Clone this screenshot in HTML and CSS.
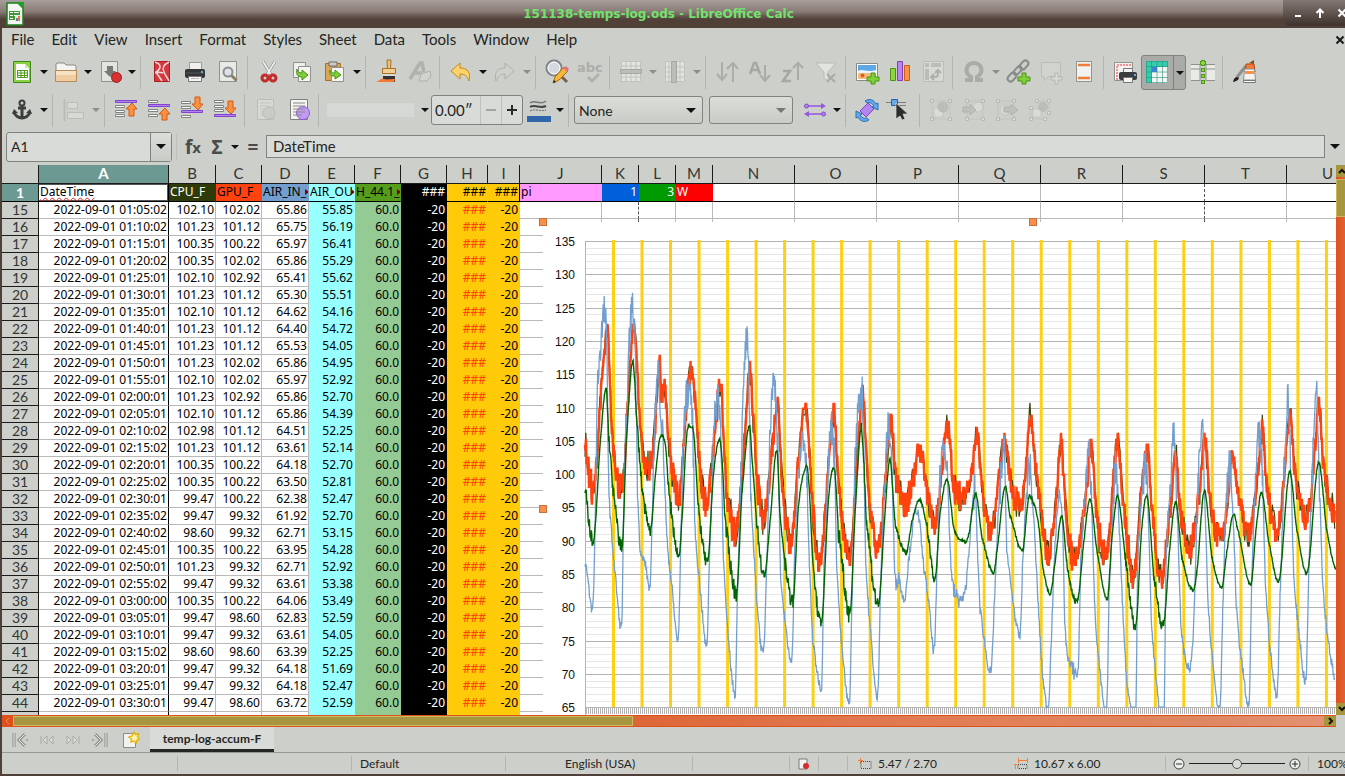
FILE: index.html
```
<!DOCTYPE html>
<html lang="en">
<head>
<meta charset="utf-8">
<title>151138-temps-log.ods - LibreOffice Calc</title>
<meta name="viewport" content="width=device-width, initial-scale=1.0">
<link rel="stylesheet" href="styles.css">
</head>
<body>
<div class="window">
    <header class="titlebar">
        <svg class="app-icon" width="20" height="24" viewBox="0 0 20 24"><path d="M2 1h11l5 5v17H2z" fill="#f4f6f2" stroke="#18811a" stroke-width="1.5"/><path d="M12 0h7v7z" fill="#1fa31f"/><path d="M4 9h11v9H4z" fill="#3f9c35"/><path d="M5 10h3v1H5zm4 0h5v1H9zm-4 3h3v1H5zm4 0h5v1H9zm-4 3h3v1H5z" fill="#fff"/><path d="M10 13h7v7h-7z" fill="#e9eef2"/><path d="M11 16h2v3h-2z" fill="#4b83c4"/><path d="M13 14h2v5h-2z" fill="#f4793b"/></svg>
        <h1>151138-temps-log.ods - LibreOffice Calc</h1>
        <div class="controls">
            <button aria-label="Minimize"><svg width="10" height="12" viewBox="0 0 10 12"><path d="M2 9h6" stroke="#fff" stroke-width="2"/></svg></button>
            <button aria-label="Maximize"><svg width="10" height="12" viewBox="0 0 10 12"><path d="M5 11V3M1.500 6 5 2.500 8.500 6" fill="none" stroke="#fff" stroke-width="2"/></svg></button>
            <button aria-label="Close"><svg width="10" height="12" viewBox="0 0 10 12"><path d="M1.500 2.500l7 7m0-7l-7 7" stroke="#fff" stroke-width="2"/></svg></button>
        </div>
    </header>

    <nav class="menubar">
        <button>File</button>
        <button>Edit</button>
        <button>View</button>
        <button>Insert</button>
        <button>Format</button>
        <button>Styles</button>
        <button>Sheet</button>
        <button>Data</button>
        <button>Tools</button>
        <button>Window</button>
        <button>Help</button>
        <button class="close-doc" aria-label="Close document"><svg width="10" height="10" viewBox="0 0 10 10"><path d="M1.500 1.500l7 7m0-7l-7 7" stroke="#1a1a1a" stroke-width="2"/></svg></button>
    </nav>

    <div class="toolbar" role="toolbar" aria-label="Standard">
        <button class="tool" aria-label="New"><svg viewBox="0 0 24 24"><path d="M3.500 1.500h17v21h-17z" fill="#8ad143" stroke="#3f8a10"/><path d="M6 4h9l4 4v12H6z" fill="#fff"/><path d="M15 4v4h4z" fill="#cfe8b8"/><path d="M7.500 10.500h10v7h-10zM7.500 13h10M7.500 15.500h10M11 10.500v7M14.500 10.500v7" fill="#fff" stroke="#4d9a1c"/></svg></button>
        <button class="drop" aria-label="New options"></button>
        <button class="tool" aria-label="Open"><svg viewBox="0 0 24 24"><path d="M2 20V4l1-1h7l2 2h9l1 1v14z" fill="#f4f4f2" stroke="#8a8a86"/><path d="M1.500 10.500h21v11h-21z" fill="#f0cda0" stroke="#b58a55"/><path d="M2 11h20v4H2z" fill="#f8e0c2"/></svg></button>
        <button class="drop" aria-label="Open options"></button>
        <button class="tool" aria-label="Save"><svg viewBox="0 0 24 24"><path d="M3.500 1.500h16v20h-16z" fill="#e2e4e0" stroke="#90928e"/><path d="M9 6h6v5h3l-6 6-6-6h3z" fill="#777975"/><circle cx="18.500" cy="17.500" r="5" fill="#d63232" stroke="#a81b1b"/></svg></button>
        <button class="drop" aria-label="Save options"></button>
        <span class="sep"></span>
        <button class="tool" aria-label="Export as PDF"><svg viewBox="0 0 24 24"><path d="M4.500 1.500h15v20h-15z" fill="#d3393e" stroke="#b2191f"/><path d="M5 2c6 2 7 6 1 10l6 9M19 2c-6 3-7 6-5 10 1 3 3 5 5 9M13 13c-3-1-5-1-8 0" fill="none" stroke="#f4dcdc" stroke-width="1.500"/></svg></button>
        <button class="tool" aria-label="Print"><svg viewBox="0 0 24 24"><path d="M6.500 2.500h12v8h-12z" fill="#f0f0ee" stroke="#9a9a98"/><rect x="2" y="9" width="20" height="9" rx="2" fill="#333537"/><path d="M3 13h18" stroke="#55585a"/><path d="M18 11h2v2h-2z" fill="#5ab2ee"/><path d="M5.500 16.500h13v5h-13z" fill="#f4f4f2" stroke="#777"/><path d="M8 18.500h8" stroke="#bbb"/></svg></button>
        <button class="tool" aria-label="Print Preview"><svg viewBox="0 0 24 24"><path d="M3.500 1.500h17v20h-17z" fill="#e8eae6" stroke="#90928e"/><circle cx="12" cy="12" r="4.500" fill="#dde2e6" stroke="#8a8f93" stroke-width="2"/><path d="M15.500 15.500l5 5" stroke="#8f7b66" stroke-width="3"/></svg></button>
        <span class="sep"></span>
        <button class="tool" aria-label="Cut"><svg viewBox="0 0 24 24"><path d="M6 1.500l8 13M18 1.500l-8 13" stroke="#8e908e" stroke-width="3"/><path d="M6 1.500l8 13M18 1.500l-8 13" stroke="#f4f4f4" stroke-width="1.500"/><ellipse cx="8" cy="18" rx="3" ry="3" fill="#c9ccc6" stroke="#c42b2b" stroke-width="3"/><ellipse cx="16" cy="18" rx="3" ry="3" fill="#c9ccc6" stroke="#c42b2b" stroke-width="3"/></svg></button>
        <button class="tool" aria-label="Copy"><svg viewBox="0 0 24 24"><path d="M3.500 2.500h12v15h-12z" fill="#eef0ec" stroke="#90928e"/><path d="M8.500 6.500h12v15h-12z" fill="#f4f5f2" stroke="#90928e"/><path d="M7 9c0 3 2 4 5 4v-3l6 5-6 5v-3c-5 0-6-3-5-8z" fill="#7fce3c" stroke="#4a9411"/></svg></button>
        <button class="tool" aria-label="Paste"><svg viewBox="0 0 24 24"><path d="M2.500 3.500h15v17h-15z" fill="#d6a557" stroke="#a87222"/><path d="M6 2h8v4H6z" fill="#ccc" stroke="#6a6a6a"/><path d="M8.500 7.500h12v14h-12z" fill="#f4f5f2" stroke="#90928e"/><path d="M7 10c0 3 2 3 5 3v-3l6 5-6 4v-3c-5 0-6-2-5-6z" fill="#7fce3c" stroke="#4a9411"/></svg></button>
        <button class="drop" aria-label="Paste options"></button>
        <span class="sep"></span>
        <button class="tool" aria-label="Clone Formatting"><svg viewBox="0 0 24 24"><path d="M12 0h4l-.5 9h-3z" fill="#ecc479" stroke="#a87222"/><path d="M7.500 8.500h13v5h-13z" fill="#efcf92" stroke="#a87222"/><path d="M8 14h12v3H8z" fill="#d9d9d9"/><path d="M8 16h12v6H8z" fill="#333"/><path d="M1 22c4-1 4-4 8-3 3 1 6 0 11 0l-1 3H8z" fill="#f47a34"/></svg></button>
        <button class="tool off" aria-label="Clear Formatting"><svg viewBox="0 0 24 24"><path d="M2 19L12 3h2l2 9M7 13h7" fill="none" stroke="#a4a6a2" stroke-width="3.500"/><path d="M13 14l9-3 1 5-4 5h-8z" fill="#d4d6d2" stroke="#a4a6a2"/></svg></button>
        <span class="sep"></span>
        <button class="tool" aria-label="Undo"><svg viewBox="0 0 24 24"><path d="M2 11l9-8v5c8 0 11 5 9 13-2-5-4-7-9-7v5z" fill="#fbd26b" stroke="#c48a1c"/></svg></button>
        <button class="drop" aria-label="Undo list"></button>
        <button class="tool off" aria-label="Redo"><svg viewBox="0 0 24 24"><path d="M21 11l-9-8v5c-8 0-11 5-9 13 2-5 4-7 9-7v5z" fill="#d0d2ce" stroke="#a4a6a2"/></svg></button>
        <button class="drop off" aria-label="Redo list"></button>
        <span class="sep"></span>
        <button class="tool" aria-label="Find and Replace"><svg viewBox="0 0 24 24"><path d="M15 15l7 7" stroke="#77614c" stroke-width="3"/><circle cx="9" cy="8" r="7.500" fill="#d5dade" stroke="#7f8286" stroke-width="2"/><circle cx="9" cy="8" r="6" fill="none" stroke="#fff"/><path d="M8 23l2-6L19 7l4 4-9 9z" fill="#f7b73c" stroke="#a86a0c"/><path d="M18 8l3-2 3 3-2 3z" fill="#e8717c"/><path d="M8 23l1-3 2 2z" fill="#222"/></svg></button>
        <button class="tool off" aria-label="Spelling"><svg viewBox="0 0 24 24"><text class="abc" x="-1" y="12">abc</text><path d="M10 17l4 4 7-7" fill="none" stroke="#a4a6a2" stroke-width="3"/></svg></button>
        <span class="sep"></span>
        <button class="tool off" aria-label="Row"><svg viewBox="0 0 24 24"><path d="M2.500 1.500h19v20h-19zM7 2v20M12 2v20M17 2v20M2 6h20M2 17h20" fill="#eceeea" stroke="#bcbeba"/><path d="M1.500 9.500h21v4h-21z" fill="#b4b6b2" stroke="#969894"/></svg></button>
        <button class="drop off" aria-label="Row options"></button>
        <button class="tool off" aria-label="Column"><svg viewBox="0 0 24 24"><path d="M2.500 1.500h19v20h-19zM6 2v20M17 2v20M2 7h20M2 12h20M2 17h20" fill="#eceeea" stroke="#bcbeba"/><path d="M8.500 1.500h5v21h-5z" fill="#b4b6b2" stroke="#969894"/></svg></button>
        <button class="drop off" aria-label="Column options"></button>
        <span class="sep"></span>
        <button class="tool off" aria-label="Sort"><svg viewBox="0 0 24 24"><path d="M7 2v18M2 14l5 6 5-6M18 22V4M12 9l6-6 5 6" fill="none" stroke="#9c9e9a" stroke-width="2"/></svg></button>
        <button class="tool off" aria-label="Sort Ascending"><svg viewBox="0 0 24 24"><path d="M2 14L6 3h2l4 11M4 10h6" fill="none" stroke="#969894" stroke-width="2.500"/><path d="M17 5v16M12 15l5 6 5-6" fill="none" stroke="#9c9e9a" stroke-width="2"/></svg></button>
        <button class="tool off" aria-label="Sort Descending"><svg viewBox="0 0 24 24"><path d="M2 11h7l-7 10h8" fill="none" stroke="#969894" stroke-width="2.500"/><path d="M17 20V3M12 8l5-5 5 5" fill="none" stroke="#9c9e9a" stroke-width="2"/></svg></button>
        <button class="tool off" aria-label="AutoFilter"><svg viewBox="0 0 24 24"><path d="M2 3h20l-8 9v9l-4-3v-6z" fill="#eceeea" stroke="#b0b2ae"/><path d="M13 14l8 8m0-8l-8 8" stroke="#9c9e9a" stroke-width="2"/></svg></button>
        <span class="sep"></span>
        <button class="tool" aria-label="Insert Image"><svg viewBox="0 0 24 24"><path d="M1.500 3.500h21v17h-21z" fill="#fff" stroke="#888a86"/><path d="M3 5h18v7H3z" fill="#5fa8e6"/><path d="M3 11c5-3 8 2 18-1v3H3z" fill="#e9f4fd"/><path d="M3 13h18v6H3z" fill="#f3bc7a"/><circle cx="7.500" cy="15.500" r="2" fill="#e05a2a"/><path d="M16 13h4v4h4v4h-4v3h-4v-3h-4v-4h4z" fill="#7fce3c" stroke="#4a9411"/></svg></button>
        <button class="tool" aria-label="Insert Chart"><svg viewBox="0 0 24 24"><path d="M2.500 8.500h5v12h-5z" fill="#8ed544" stroke="#4a9411"/><path d="M9.500 1.500h5v19h-5z" fill="#ba85ea" stroke="#7d40b8"/><path d="M16.500 5.500h5v15h-5z" fill="#fb9243" stroke="#cf5c12"/></svg></button>
        <button class="tool off" aria-label="Pivot Table"><svg viewBox="0 0 24 24"><path d="M2.500 1.500h20v20h-20z" fill="#dcdeda" stroke="#b4b6b2"/><path d="M4 3h4v4H4zM10 3h10v4H10zM4 9h4v11H4z" fill="#b4b6b2"/><path d="M11 17c6 0 6 0 6-6m-3 2l3-3 3 3m-7 1l-3 3 3 3" fill="none" stroke="#a0a29e" stroke-width="2"/></svg></button>
        <span class="sep"></span>
        <button class="tool off" aria-label="Special Character"><svg viewBox="0 0 24 24"><path d="M3 20h6v-3c-8-5-4-14 3-14s11 9 3 14v3h6" fill="none" stroke="#9a9c98" stroke-width="4"/></svg></button>
        <button class="drop off" aria-label="Special character options"></button>
        <button class="tool" aria-label="Insert Hyperlink"><svg viewBox="0 0 24 24"><g fill="none" stroke="#8a8c8a" stroke-width="2"><rect x="13" y="2" width="10" height="6" rx="3" transform="rotate(-48 18 5)"/><rect x="7" y="8" width="10" height="5" rx="2.500" transform="rotate(-48 12 11)"/><rect x="1" y="14" width="10" height="6" rx="3" transform="rotate(-48 6 17)"/></g><path d="M16 13h4v4h4v4h-4v3h-4v-3h-4v-4h4z" fill="#7fce3c" stroke="#4a9411"/></svg></button>
        <button class="tool off" aria-label="Insert Comment"><svg viewBox="0 0 24 24"><path d="M2.500 2.500h19v14H10l-5 4v-4H2.500z" fill="#d4d6d2" stroke="#b4b6b2"/><path d="M16 13h3v4h4v3h-4v4h-3v-4h-4v-3h4z" fill="#dcdeda" stroke="#acaeaa"/></svg></button>
        <button class="tool" aria-label="Headers and Footers"><svg viewBox="0 0 24 24"><path d="M4.500 1.500h15v20h-15z" fill="#f2f3f0" stroke="#90928e"/><path d="M6 5h12M6 18h12" stroke="#f07b3a" stroke-width="2.500"/></svg></button>
        <span class="sep"></span>
        <button class="tool" aria-label="Define Print Area"><svg viewBox="0 0 24 24"><path d="M1.500 2.500h18v18h-18z" fill="#f2f3f0" stroke="#90928e"/><path d="M4 20V5h15" fill="none" stroke="#e33" stroke-dasharray="2 1"/><path d="M10.500 8.500h9v5h-9z" fill="#f4f4f2" stroke="#777"/><rect x="6" y="12" width="18" height="8" rx="2" fill="#3a3c3e"/><path d="M21 14h2v2h-2z" fill="#5ab2ee"/><path d="M10.500 17.500h9v5h-9z" fill="#f4f4f2" stroke="#777"/></svg></button>
        <span class="toggle">
            <button class="tool" aria-label="Freeze Rows and Columns" aria-pressed="true"><svg viewBox="0 0 24 24"><path d="M0 0h22v22H0z" fill="#f5f6f4"/><path d="M0 0h22v6H0zM0 6h6v16H0z" fill="#34cdae"/><path d="M6 6h5v5H6z" fill="#3f7fdc"/><path d="M.5 .5h21v21H.5zM5.500 0v22M11 0v22M16.500 0v22M0 5.500h22M0 11h22M0 16.500h22" fill="none" stroke="#27937d" stroke-opacity=".6"/></svg></button>
            <button class="drop" aria-label="Freeze options"></button>
        </span>
        <button class="tool" aria-label="Split Window"><svg viewBox="0 0 24 24"><path d="M0 4h9v17H0zM15 4h9v17h-9z" fill="#e9ebe7"/><path d="M0 4.500h9V21M24 4.500h-9V21M0 9h9m6 0h9M0 20.500h9m6 0h9" fill="none" stroke="#8f918d"/><path d="M12 0v6M9 3h6M12 8v4m0 2v4m0 2v4" stroke="#4d9c14" stroke-width="4"/><path d="M12 1v4M10 3h4M12 9v2m0 4v2m0 4v2" stroke="#8ad548" stroke-width="2"/></svg></button>
        <span class="sep"></span>
        <button class="tool" aria-label="Show Draw Functions"><svg viewBox="0 0 24 24"><path d="M14 6L5 17" stroke="#8d8f8d" stroke-width="3"/><path d="M1 22c1-5 4-6 6-4-1 3-3 3-6 4z" fill="#222"/><path d="M14 4h8l1 8H13z" fill="#f07b3a" stroke="#b9460c"/><path d="M17 3l5-3v4z" fill="#8c4a16"/><path d="M12.500 9h10l1 11h-12z" fill="#f2f3f0" stroke="#90928e"/><path d="M13 11h9v3h-9z" fill="#fb9243"/><path d="M11.500 20.500h12v2h-12z" fill="#fff" stroke="#777"/></svg></button>
    </div>

    <div class="toolbar" role="toolbar" aria-label="Drawing Object Properties">
        <button class="tool" aria-label="Anchor"><svg viewBox="0 0 24 24"><circle cx="12" cy="5" r="2.500" fill="none" stroke="#3c3e3e" stroke-width="2"/><path d="M12 7v12M8 10h8M4 14c1 4 5 6 8 6s7-2 8-6" fill="none" stroke="#3c3e3e" stroke-width="3"/><path d="M2 16l2-5 4 4zM22 16l-2-5-4 4z" fill="#3c3e3e"/></svg></button>
        <button class="drop" aria-label="Anchor options"></button>
        <span class="sep"></span>
        <button class="tool off" aria-label="Align Objects"><svg viewBox="0 0 24 24"><path d="M2.500 1v22" stroke="#b4b6b2" stroke-width="2"/><path d="M5.500 4.500h10v6h-10zM5.500 14.500h16v6h-16z" fill="#dcdeda" stroke="#b4b6b2"/></svg></button>
        <button class="drop off" aria-label="Align options"></button>
        <span class="sep"></span>
        <button class="tool" aria-label="Bring to Front"><svg viewBox="0 0 24 24"><path d="M1.500 7.500h9v2h-9zm0 5h9v2h-9zm0 4h9v2h-9z" fill="#fff" stroke="#80827e"/><path d="M1.500 2.500h21v2h-21z" fill="#b184ee" stroke="#8243cf"/><path d="M18 5l5 6h-3v7h-5v-7h-3z" fill="#fb9040" stroke="#d05a14"/></svg></button>
        <button class="tool" aria-label="Forward One"><svg viewBox="0 0 24 24"><path d="M1.500 2.500h9v2h-9zm0 9h9v2h-9zm0 5h9v2h-9z" fill="#fff" stroke="#80827e"/><path d="M1.500 6.500h21v2h-21z" fill="#b184ee" stroke="#8243cf"/><path d="M18 10l5 6h-3v6h-5v-6h-3z" fill="#fb9040" stroke="#d05a14"/></svg></button>
        <button class="tool" aria-label="Back One"><svg viewBox="0 0 24 24"><path d="M1.500 3.500h9v2h-9zm0 5h9v2h-9zm0 9h9v2h-9z" fill="#fff" stroke="#80827e"/><path d="M1.500 12.500h21v2h-21z" fill="#b184ee" stroke="#8243cf"/><path d="M18 12l5-6h-3V-1h-5v7h-3z" fill="#fb9040" stroke="#d05a14"/></svg></button>
        <button class="tool" aria-label="Send to Back"><svg viewBox="0 0 24 24"><path d="M1.500 2.500h9v2h-9zm0 5h9v2h-9zm0 4h9v2h-9z" fill="#fff" stroke="#80827e"/><path d="M1.500 16.500h21v2h-21z" fill="#b184ee" stroke="#8243cf"/><path d="M18 16l5-6h-3V3h-5v7h-3z" fill="#fb9040" stroke="#d05a14"/></svg></button>
        <span class="sep"></span>
        <button class="tool off" aria-label="To Foreground"><svg viewBox="0 0 24 24"><path d="M3.500 1.500h16v20h-16z" fill="#dcdeda" stroke="#b4b6b2"/><path d="M6 5h11M6 8h11M6 11h11M6 14h11M6 17h11" stroke="#c0c2be"/><circle cx="15" cy="15" r="6" fill="#c8cac6" stroke="#b4b6b2"/></svg></button>
        <button class="tool" aria-label="To Background"><svg viewBox="0 0 24 24"><path d="M3.500 1.500h17v20h-17z" fill="#f4f5f2" stroke="#80827e"/><circle cx="16" cy="15" r="6.500" fill="#c29cf2" stroke="#9257dc"/><path d="M6 5h12M6 8h12M6 11h12M6 14h12M6 17h9" stroke="#8a8c8a"/></svg></button>
        <span class="sep"></span>
        <label class="linestyle"><select aria-label="Line Style" disabled></select></label>
        <button class="drop" aria-label="Line styles"></button>
        <div class="spin">
            <input type="text" value="0.00&Prime;" aria-label="Line Width">
            <button class="minus" aria-label="Decrease"><svg width="12" height="12" viewBox="0 0 12 12"><path d="M1 6h10" stroke="#a4a6a2" stroke-width="2"/></svg></button>
            <button aria-label="Increase"><svg width="12" height="12" viewBox="0 0 12 12"><path d="M1 6h10M6 1v10" stroke="#2a2c2a" stroke-width="2"/></svg></button>
        </div>
        <button class="tool line-color" aria-label="Line Color"><svg viewBox="0 0 24 24"><path d="M3 5c5-4 10 3 16-2" fill="none" stroke="#777" stroke-width="1.500"/><path d="M3 9c5-3 10 2 16-1" fill="none" stroke="#444" stroke-width="2"/><path d="M3 13c5-3 10 1 16-1" fill="none" stroke="#666" stroke-dasharray="2 1"/><path d="M0 18h24v6H0z" fill="#2f65ab"/></svg></button>
        <button class="drop" aria-label="Line colors"></button>
        <span class="sep"></span>
        <label class="combo"><select aria-label="Area Style"><option>None</option></select></label>
        <label class="combo small"><select aria-label="Area Fill"></select></label>
        <button class="tool arrows" aria-label="Arrow Style"><svg viewBox="0 0 24 24"><path d="M4 8h15M5 16h15" stroke="#9257dc" stroke-width="1.500"/><circle cx="3.500" cy="8" r="2" fill="#b184ee" stroke="#8243cf"/><circle cx="20.500" cy="16" r="2" fill="#b184ee" stroke="#8243cf"/><path d="M18 5l5 3-5 3zM6 13l-5 3 5 3z" fill="#9257dc"/></svg></button>
        <button class="drop" aria-label="Arrow styles"></button>
        <span class="sep"></span>
        <button class="tool" aria-label="Rotate"><svg viewBox="0 0 24 24"><path d="M13 5l6 6-8 8-6-6z" fill="#b184ee" stroke="#8243cf"/><path d="M10 3c5-3 9-1 11 3l2-1v7l-6-3 2-1c-2-3-4-4-7-3z" fill="#63a9ec" stroke="#2f70b4"/><path d="M14 22c-5 3-9 1-11-3l-2 1v-7l6 3-2 1c2 3 4 4 7 3z" fill="#63a9ec" stroke="#2f70b4"/></svg></button>
        <button class="tool" aria-label="Points"><svg viewBox="0 0 24 24"><path d="M-2 4.500h20M10 7.500h8" stroke="#7c7e7c"/><path d="M3.500 1.500h6v6h-6z" fill="#63a9ec" stroke="#2260a8"/><path d="M8 5v16l4-3 2 4 3-1-2-5h5z" fill="#2b2d2d" stroke="#d8dad6" stroke-width=".7"/></svg></button>
        <span class="sep"></span>
        <button class="tool off" aria-label="Group"><svg viewBox="0 0 24 24"><path d="M3 3h18v18H3z" fill="none" stroke="#c0c2be"/><path d="M5 10h9v9H5z" fill="#e0e2de" stroke="#c0c2be"/><circle cx="14" cy="9" r="5.500" fill="#b4b6b2"/><path d="M1.500 1.500h3v3h-3zm18 0h3v3h-3zm-18 18h3v3h-3zm18 0h3v3h-3z" fill="#e0e2de" stroke="#aeb0ac"/></svg></button>
        <button class="tool off" aria-label="Enter Group"><svg viewBox="0 0 24 24"><path d="M5 3h16v18H5z" fill="none" stroke="#c0c2be"/><circle cx="16" cy="9" r="5" fill="#dcdeda" stroke="#c0c2be"/><path d="M1 9h7V6l6 6-6 5v-3H1z" fill="#b8bab6" stroke="#a4a6a2"/><path d="M3.500 1.500h3v3h-3zm16 0h3v3h-3zm-16 18h3v3h-3zm16 0h3v3h-3z" fill="#e0e2de" stroke="#aeb0ac"/></svg></button>
        <button class="tool off" aria-label="Exit Group"><svg viewBox="0 0 24 24"><path d="M3 3h16v18H3z" fill="none" stroke="#c0c2be"/><circle cx="10" cy="12" r="5" fill="#dcdeda" stroke="#c0c2be"/><path d="M9 9h7V6l7 6-7 5v-3H9z" fill="#b8bab6" stroke="#a4a6a2"/><path d="M1.500 1.500h3v3h-3zm16 0h3v3h-3zm-16 18h3v3h-3zm16 0h3v3h-3z" fill="#e0e2de" stroke="#aeb0ac"/></svg></button>
        <button class="tool off" aria-label="Ungroup"><svg viewBox="0 0 24 24"><path d="M7 3h14v12M3 9v12h13" fill="none" stroke="#c0c2be"/><path d="M5 11h8v8H5z" fill="#e0e2de" stroke="#c0c2be"/><circle cx="15" cy="9" r="5" fill="#b4b6b2"/><path d="M7.500 1.500h3v3h-3zm12 0h3v3h-3zm-18 7h3v3h-3zm0 11h3v3h-3zm14 0h3v3h-3zm4-6h3v3h-3z" fill="#e0e2de" stroke="#aeb0ac"/></svg></button>
    </div>

    <div class="formulabar">
        <div class="namebox">
            <input type="text" value="A1" aria-label="Name Box">
            <button class="drop" aria-label="Name list"></button>
        </div>
        <span class="sep"></span>
        <button class="fx" aria-label="Function Wizard">f<sub>x</sub></button>
        <button class="fx" aria-label="Select Function">Σ</button>
        <button class="drop" aria-label="Functions"></button>
        <button class="fx eq" aria-label="Formula">=</button>
        <input class="formula" type="text" value="DateTime" aria-label="Input line">
        <button class="drop expand" aria-label="Expand Formula Bar"></button>
    </div>

    <main class="workspace">
        <div class="sheet">
            <table>
                <colgroup>
                    <col class="w-head"><col class="w-a"><col class="w-b"><col class="w-c"><col class="w-b"><col class="w-c"><col class="w-c"><col class="w-c"><col class="w-h"><col class="w-i"><col class="w-wide"><col class="w-k"><col class="w-k"><col class="w-k"><col class="w-wide"><col class="w-wide"><col class="w-wide"><col class="w-wide"><col class="w-wide"><col class="w-wide"><col class="w-wide"><col class="w-wide">
                </colgroup>
                <thead>
                    <tr class="letters"><th></th><th class="current">A</th><th>B</th><th>C</th><th>D</th><th>E</th><th>F</th><th>G</th><th>H</th><th>I</th><th>J</th><th>K</th><th>L</th><th>M</th><th>N</th><th>O</th><th>P</th><th>Q</th><th>R</th><th>S</th><th>T</th><th>U</th></tr>
                    <tr class="frozen">
                        <th class="current">1</th>
                        <td class="col-a active"><span class="misspelt">DateTime</span></td>
                        <td class="cpu">CPU_F</td>
                        <td class="gpu">GPU_F</td>
                        <td class="air-in more">AIR_IN_</td>
                        <td class="air-out more">AIR_OU</td>
                        <td class="hum more">H_44.1_</td>
                        <td class="num black">###</td>
                        <td class="num gold">###</td>
                        <td class="num gold edge">###</td>
                        <td class="pink">pi</td>
                        <td class="num blue">1</td>
                        <td class="num green">3</td>
                        <td class="red">W</td>
                        <td></td><td></td><td></td><td></td><td></td><td class="pagebreak"></td><td></td><td></td>
                    </tr>
                </thead>
                <tbody id="rows"></tbody>
            </table>
            <div class="chart">
                <svg id="plot" width="980" height="574" role="img" aria-label="Temperature log"></svg>
                <span class="handle top-left"></span>
                <span class="handle top"></span>
                <span class="handle left"></span>
            </div>
        </div>
        <div class="vscroll">
            <button aria-label="Scroll up"><svg width="8" height="8" viewBox="0 0 8 8"><path d="M1 6l3-3 3 3" fill="none" stroke="#111" stroke-width="2"/></svg></button>
            <span class="thumb"></span>
            <button aria-label="Scroll down"><svg width="8" height="8" viewBox="0 0 8 8"><path d="M1 2l3 3 3-3" fill="none" stroke="#111" stroke-width="2"/></svg></button>
        </div>
    </main>

    <div class="hscroll">
        <button class="start" aria-label="Scroll left"><svg width="8" height="8" viewBox="0 0 8 8"><path d="M5 1L2 4l3 3" fill="none" stroke="#f08c58" stroke-width="1"/></svg></button>
        <span class="thumb"></span>
        <button aria-label="Scroll right"><svg width="8" height="8" viewBox="0 0 8 8"><path d="M3 1l3 3-3 3" fill="none" stroke="#111" stroke-width="2"/></svg></button>
    </div>

    <div class="tabs">
        <button aria-label="First Sheet"><svg width="18" height="16" viewBox="0 0 18 16"><path d="M2 1v14M13 2L7 8l6 6" fill="none" stroke="#8e908c" stroke-width="3"/><path d="M2 1v14M13 2L7 8l6 6" fill="none" stroke="#e4e6e2"/><path d="M14 7h2v2h-2z" fill="#a2a4a0"/></svg></button>
        <button aria-label="Previous Sheet"><svg width="18" height="16" viewBox="0 0 18 16"><path d="M3 4v8M9 4L5 8l4 4zM15 4l-4 4 4 4z" fill="#dcdeda" stroke="#a8aaa6"/></svg></button>
        <button aria-label="Next Sheet"><svg width="18" height="16" viewBox="0 0 18 16"><path d="M15 4v8M9 4l4 4-4 4zM3 4l4 4-4 4z" fill="#dcdeda" stroke="#a8aaa6"/></svg></button>
        <button aria-label="Last Sheet"><svg width="18" height="16" viewBox="0 0 18 16"><path d="M16 1v14M5 2l6 6-6 6" fill="none" stroke="#8e908c" stroke-width="3"/><path d="M16 1v14M5 2l6 6-6 6" fill="none" stroke="#e4e6e2"/><path d="M2 7h2v2H2z" fill="#a2a4a0"/></svg></button>
        <button class="add" aria-label="Add Sheet"><svg width="18" height="18" viewBox="0 0 18 18"><path d="M1.500 2.500h12v14h-12z" fill="#f2f3f0" stroke="#8a8c88"/><path d="M12 1l1.500 2.500 3-.5-1 3L18 8l-3 1-.5 3-2.500-2-3 1 .5-3L7 6l3-1z" fill="#fff3b0" stroke="#e8b50c" stroke-width="1.500"/></svg></button>
        <button class="tab">temp-log-accum-F</button>
    </div>

    <footer class="statusbar">
        <span class="cell first"></span>
        <span class="cell second"></span>
        <span class="cell style">Default</span>
        <span class="cell lang">English (USA)</span>
        <span class="cell mode"></span>
        <span class="cell mod"><svg width="12" height="12" viewBox="0 0 12 12"><path d="M1 1h8v10H1z" fill="#f4f4f2" stroke="#777"/><circle cx="8" cy="8" r="3" fill="#d22f2f"/></svg></span>
        <span class="cell sign"></span>
        <span class="cell pos"><svg width="14" height="12" viewBox="0 0 14 12"><path d="M2.500 0v6M0 2.500h5" stroke="#f0803c"/><path d="M3 3.500h10v7H3z" fill="none" stroke="#444" stroke-dasharray="1 1"/></svg>5.47 / 2.70</span>
        <span class="size"><svg width="14" height="12" viewBox="0 0 14 12"><path d="M4 2.500h9M4.500 0v5M13.500 0v5M0 6.500h3M1.500 6v5" stroke="#f0803c"/><path d="M4 6.500h9v4H4z" fill="none" stroke="#444" stroke-dasharray="1 1"/></svg>10.67 x 6.00</span>
        <div class="zoom">
            <button aria-label="Zoom out"><svg width="12" height="12" viewBox="0 0 12 12"><circle cx="6" cy="6" r="5" fill="#eceeea" stroke="#444"/><path d="M3 6h6" stroke="#333"/></svg></button>
            <input type="range" min="0" max="100" value="50" aria-label="Zoom">
            <button aria-label="Zoom in"><svg width="12" height="12" viewBox="0 0 12 12"><circle cx="6" cy="6" r="5" fill="#eceeea" stroke="#444"/><path d="M3 6h6M6 3v6" stroke="#333"/></svg></button>
        </div>
        <span class="percent">100%</span>
    </footer>
</div>
<script src="script.js"></script>
</body>
</html>
```
FILE: styles.css
```
* {
    margin: 0;
    padding: 0;
    box-sizing: border-box;
}

body {
    height: 100vh;
    overflow: hidden;
    background: #4f4039;
    font-family: Lato, sans-serif;
    font-size: 14px;
    color: #232623;
}

button, input, select {
    font: inherit;
    color: inherit;
    border: none;
    background: none;
    outline: none;
}

button {
    display: flex;
    align-items: center;
    justify-content: center;
    flex: none;
}

/* the frame runs a little past the right edge of the desktop */
.window {
    width: calc(100% + 5px);
    height: 100vh;
    display: flex;
    flex-direction: column;
    border: solid #4f4039;
    border-width: 0 2px 2px;
    background: #cdcfca;
}

/* title bar */
.titlebar {
    flex: none;
    height: 28px;
    margin: 0 -5px 0 -2px;
    padding-left: 5px;
    display: flex;
    align-items: center;
    background: linear-gradient(#a89e9c, #8b7d78 40%, #5d4d46 62%, #504038 70%, #504038);
}

.titlebar h1 {
    flex: 1;
    text-align: center;
    font: bold 12px "DejaVu Sans", sans-serif;
    color: #72e36d;
    padding-left: 9px;
}

.controls {
    display: flex;
    height: 26px;
    align-self: flex-start;
    padding: 0 0 0 4px;
    background: linear-gradient(#837874, #3e312c);
    border-radius: 0 0 0 8px;
}

.controls button {
    width: 22px;
}

/* menus */
.menubar {
    display: flex;
    flex: none;
    height: 25px;
    padding: 0 0 4px 1px;
    font-size: 15px;
}

.menubar button {
    padding: 0 9px 0 8px;
}

.menubar .close-doc {
    margin-left: auto;
    padding: 2px 3px 0;
}

/* toolbars */
.toolbar {
    display: flex;
    flex: none;
    align-items: center;
    height: 38px;
    padding-left: 3px;
}

.tool {
    width: 33px;
    height: 34px;
}

.tool svg {
    width: 24px;
    height: 24px;
    overflow: visible;
}

.tool.off svg {
    opacity: 0.7;
}

.abc {
    font: bold 13px "DejaVu Sans", sans-serif;
    fill: #9fa19d;
}

.drop {
    width: 11px;
    height: 34px;
}

.drop::before,
.combo::after {
    content: "";
    border: 4px solid transparent;
    border-top: 4px solid #111;
    border-bottom: none;
}

.drop.off::before {
    border-top-color: #8c8e8a;
}

.sep {
    flex: none;
    width: 1px;
    height: 33px;
    margin: 0 4px 0 3px;
    background: #b3b5b0;
}

.toggle {
    display: flex;
    border: 1px solid #80827e;
    border-radius: 3px;
    background: #a9aba7;
    height: 35px;
}

.toggle .tool {
    width: 32px;
    border-right: 1px solid #80827e;
}

.linestyle select {
    display: block;
    width: 87px;
    height: 14px;
    margin: 0 5px 0 4px;
    background: #d9dbd8;
    appearance: none;
}

.spin {
    display: flex;
    width: 92px;
    height: 30px;
    margin: 0 0 0 1px;
    border: 1px solid #80827e;
    border-radius: 3px;
    background: #d9dbd8;
    font-size: 15px;
}

.spin input {
    flex: 1;
    min-width: 0;
    padding-left: 3px;
}

.spin button {
    width: 21px;
    border-left: 1px solid #bfc1bc;
}

.line-color {
    width: 31px;
}

.combo {
    position: relative;
    width: 129px;
    height: 28px;
    margin-left: 1px;
    border: 1px solid #80827e;
    border-radius: 3px;
    background: linear-gradient(#dbddd9, #c9cbc6);
    font-size: 14px;
}

.combo::after {
    position: absolute;
    right: 6px;
    top: 11px;
    border-width: 5px 5px 0;
}

.combo.small {
    width: 84px;
    margin-left: 6px;
}

.combo.small::after {
    border-top-color: #777975;
}

.combo select {
    width: 100%;
    height: 100%;
    padding-left: 4px;
    appearance: none;
}

.arrows {
    margin-left: 5px;
}

/* formula bar */
.formulabar {
    display: flex;
    flex: none;
    align-items: center;
    height: 36px;
    padding: 0 3px 1px 4px;
    font-size: 15px;
}

.namebox {
    display: flex;
    width: 166px;
    height: 30px;
    border: 1px solid #80827e;
    border-radius: 3px;
    background: #d9dbd8;
    font-size: 14px;
}

.namebox input {
    flex: 1;
    min-width: 0;
    padding-left: 4px;
}

.namebox .drop {
    width: 21px;
    height: 28px;
    border-left: 1px solid #80827e;
    background: linear-gradient(#dbddd9, #c9cbc6);
}

.namebox .drop::before,
.expand::before {
    border-width: 5px 5px 0;
}

.formulabar > .sep {
    margin: 0 4px;
    height: 26px;
    background: #bfc1bc;
}

.fx {
    width: 24px;
    font: bold 19px "Noto Sans", sans-serif;
    color: #4a4c4a;
}

.fx sub {
    font-size: 15px;
    vertical-align: baseline;
}

.fx.eq {
    width: 26px;
}

.formula {
    flex: 1;
    height: 23px;
    padding: 0 6px 2px;
    border: 1px solid #80827e;
    background: #d9dbd8;
}

.expand {
    width: 20px;
}

/* sheet */
.workspace {
    display: flex;
    flex: 1;
    min-height: 0;
}

.sheet {
    position: relative;
    flex: 1;
    min-width: 0;
    overflow: hidden;
    background: #fff;
}

table {
    width: 1367px;
    table-layout: fixed;
    border-collapse: separate;
    border-spacing: 0;
    font-family: "Noto Sans", sans-serif;
    font-size: 12px;
    color: #000;
}

.w-head { width: 37px; }
.w-a { width: 130px; }
.w-b { width: 47px; }
.w-c { width: 46px; }
.w-h { width: 41px; }
.w-i { width: 32px; }
.w-k { width: 37px; }
.w-wide { width: 82px; }

th {
    font: 14px Lato, sans-serif;
    line-height: 15px;
    padding-bottom: 1px;
    color: #333533;
    background: #cdcfca;
    border-right: 1px solid #1a1a1a;
    border-bottom: 1px solid #1a1a1a;
}

.letters th {
    height: 19px;
    font-size: 15px;
    line-height: 17px;
}

th.current {
    background: #6c9a93;
    color: #fff;
    font-weight: bold;
}

td {
    height: 17px;
    line-height: 16px;
    padding: 0 1px;
    white-space: nowrap;
    overflow: hidden;
    border-right: 1px solid #b9b9b9;
    border-bottom: 1px solid #b9b9b9;
}

tbody td:not(:empty),
.num {
    text-align: right;
}

.frozen td,
.frozen th {
    position: relative;
    height: 18px;
    border-bottom: 1px solid #000;
}

.frozen td {
    padding-bottom: 1px;
}

td.col-a {
    border-right: 1px solid #000;
}

.active {
    box-shadow: inset -1px -1px #555, inset 0 1px #555;
}

.misspelt {
    text-decoration: underline wavy #e02020 1px;
    text-underline-offset: 1px;
}

.more::after {
    content: "";
    position: absolute;
    right: -1px;
    top: 5px;
    border: 3px solid transparent;
    border-left: 4px solid #7a0000;
    border-right: none;
}

.cpu { background: #2e3b08; color: #fff; border-right-color: #2e3b08; }
.gpu { background: #ff420e; border-right-color: #ff420e; }
.air-in { background: #729fcf; border-right-color: #729fcf; }
.air-out { background: #98ffff; border-color: #98ffff; }
.hum { background: #579d1c; border-right-color: #579d1c; }
.hum-row { background: #94ca94; border-color: #94ca94; }
.black { background: #000; color: #fff; border-color: #000; }
.gold { background: #ffca08; border-color: #ffca08; }
.gold.hash { color: #ff420e; }
.edge { border-right-color: #000; }
.pink { background: #ff99ff; border-right-color: #ff99ff; }
.blue { background: #0060da; color: #fff; border-right-color: #0060da; }
.green { background: #009900; color: #fff; border-right-color: #009900; }
.red { background: #ff0000; color: #fff; border-right-color: #ff0000; }

td.pagebreak {
    border-right: 1px dashed #555;
}

/* chart object floating over the cells */
.chart {
    position: absolute;
    left: 541px;
    top: 57px;
    background: #fff;
}

.chart svg {
    display: block;
}

.chart text {
    font: 12px "Liberation Sans", sans-serif;
    fill: #111;
    text-anchor: end;
}

.handle {
    position: absolute;
    width: 8px;
    height: 8px;
    border: 1px solid #c8703c;
    background: #f98f48;
}

.handle.top-left { left: -4px; top: -4px; }
.handle.top { left: calc(50% - 4px); top: -4px; }
.handle.left { left: -4px; top: calc(50% - 4px); }

/* scrollbars */
.vscroll {
    display: flex;
    flex-direction: column;
    flex: none;
    width: 12px;
    background: linear-gradient(to right, #e0501c, #dc6a3c);
}

.vscroll button,
.hscroll button {
    width: 12px;
    height: 12px;
    background: #a6963f;
}

.vscroll .thumb {
    height: 38px;
    margin: 2px 0 auto;
    border: 1px solid #c8b85c;
    background: #a6963f;
}

.hscroll {
    display: flex;
    flex: none;
    height: 12px;
    margin-right: 12px;
    border: solid #e0501c;
    border-width: 1px 0;
    background: linear-gradient(to right, #dd6333 45%, #e0744a 60%, #e28058 75%, #dd8862 90%, #e59375);
}

.hscroll .thumb {
    flex: 0 0 46.5%;
    margin-right: auto;
    border: 1px solid #cdbb60;
    background: #a6963f;
}

.hscroll button {
    height: 10px;
}

.hscroll .start {
    width: 11px;
    background: #e0501c;
}

/* sheet tabs */
.tabs {
    display: flex;
    flex: none;
    height: 26px;
    padding: 0 0 0 6px;
    border-bottom: 1px solid #989a96;
}

.tabs button {
    width: 26px;
}

.tabs .add {
    width: 38px;
}

.tabs .tab {
    width: 124px;
    font-size: 12px;
    font-weight: bold;
    background: #d9dbd8;
    border-bottom: 3px solid #232623;
}

/* status bar */
.statusbar {
    display: flex;
    flex: none;
    align-items: center;
    height: 21px;
    font-size: 12px;
}

.cell {
    display: flex;
    align-items: center;
    height: 15px;
    border-right: 1px solid #b3b5b0;
}

.statusbar svg {
    flex: none;
}

.first { flex: 0 0 176px; }
.second { flex: 0 0 174px; }
.style { flex: 0 0 154px; padding-left: 8px; }
.lang { flex: 0 0 187px; padding-left: 59px; }
.mode { flex: 1; }
.mod { flex: 0 0 29px; justify-content: center; }
.sign { flex: 0 0 29px; }

.pos {
    flex: 0 0 158px;
    padding-left: 10px;
    gap: 6px;
    border-right: none;
}

.size {
    display: flex;
    flex: 0 0 159px;
    align-items: center;
    padding-left: 8px;
    gap: 6px;
}

.zoom {
    display: flex;
    flex: 0 0 144px;
    min-width: 0;
    align-items: center;
    height: 15px;
    padding: 0 7px;
    gap: 4px;
    border: solid #b3b5b0;
    border-width: 0 1px;
}

.zoom input {
    flex: 1;
    min-width: 0;
    height: 12px;
    appearance: none;
    background: linear-gradient(#222, #222) center / 100% 1px no-repeat;
}

.zoom input::-webkit-slider-thumb {
    appearance: none;
    width: 10px;
    height: 10px;
    border: 1px solid #555;
    border-radius: 50%;
    background: #d9dbd8;
}

.percent {
    flex: 0 0 39px;
    padding-left: 8px;
}
```
FILE: script.js
```
// time, CPU, GPU, air in, air out
const log = [
    ["01:05:02", "102.10", "102.02", "65.86", "55.85"],
    ["01:10:02", "101.23", "101.12", "65.75", "56.19"],
    ["01:15:01", "100.35", "100.22", "65.97", "56.41"],
    ["01:20:02", "100.35", "102.02", "65.86", "55.29"],
    ["01:25:01", "102.10", "102.92", "65.41", "55.62"],
    ["01:30:01", "101.23", "101.12", "65.30", "55.51"],
    ["01:35:01", "102.10", "101.12", "64.62", "54.16"],
    ["01:40:01", "101.23", "101.12", "64.40", "54.72"],
    ["01:45:01", "101.23", "101.12", "65.53", "54.05"],
    ["01:50:01", "101.23", "102.02", "65.86", "54.95"],
    ["01:55:01", "102.10", "102.02", "65.97", "52.92"],
    ["02:00:01", "101.23", "102.92", "65.86", "52.70"],
    ["02:05:01", "102.10", "101.12", "65.86", "54.39"],
    ["02:10:02", "102.98", "101.12", "64.51", "52.25"],
    ["02:15:02", "101.23", "101.12", "63.61", "52.14"],
    ["02:20:01", "100.35", "100.22", "64.18", "52.70"],
    ["02:25:02", "100.35", "100.22", "63.50", "52.81"],
    ["02:30:01", "99.47", "100.22", "62.38", "52.47"],
    ["02:35:02", "99.47", "99.32", "61.92", "52.70"],
    ["02:40:02", "98.60", "99.32", "62.71", "53.15"],
    ["02:45:01", "100.35", "100.22", "63.95", "54.28"],
    ["02:50:01", "101.23", "99.32", "62.71", "52.92"],
    ["02:55:02", "99.47", "99.32", "63.61", "53.38"],
    ["03:00:00", "100.35", "100.22", "64.06", "53.49"],
    ["03:05:01", "99.47", "98.60", "62.83", "52.59"],
    ["03:10:01", "99.47", "99.32", "63.61", "54.05"],
    ["03:15:02", "98.60", "98.60", "63.39", "52.25"],
    ["03:20:01", "99.47", "99.32", "64.18", "51.69"],
    ["03:25:01", "99.47", "99.32", "64.18", "52.47"],
    ["03:30:01", "99.47", "98.60", "63.72", "52.59"],
    ["03:35:02", "99.47", "100.22", "62.71", "52.27"]
];

const tbody = document.getElementById("rows");
log.forEach((r, i) => {
    let rest = "";
    for (let c = 0; c < 12; c++) {
        rest += c === 1 || c === 9 ? '<td class="pagebreak"></td>' : "<td></td>";
    }
    tbody.insertAdjacentHTML("beforeend", `<tr><th>${15 + i}</th><td class="col-a">2022-09-01 ${r[0]}</td>
        <td>${r[1]}</td><td>${r[2]}</td><td>${r[3]}</td><td class="air-out">${r[4]}</td>
        <td class="hum-row">60.0</td><td class="black">-20</td><td class="gold hash">###</td><td class="gold">-20</td>${rest}</tr>`);
});

// series keyframes: x in the plot, temperature, optional jitter
const gpu = [
    [0,105],[3,101],[7.3,97.5,2.6],[10,99],[15,110],[20,118.5],[23,121],[26.7,107],[31,101],[35,98,2.6],[39,99.5,2.4],[43,112],[49.3,122.5],[52,116],[55,108],[59,102],[63.3,101.2,2],[67,102.5,2],[69.3,106],[74.3,116.5],[76,112],[80,112.5,2],[83,106],[87,100],[92.7,97,2.6],[95,97],[98.3,104],[102,111],[106,115.5],[109,113],[112.3,106],[116,99],[120.7,95.2,2.6],[125,99],[130,107],[135.7,113.5],[138,107],[142,96.5],[146,93.5],[150,91,2.6],[155,96],[160,106],[165,115.5],[168,108],[173,98],[178,93,2.6],[183,97.5],[188,105],[192.7,111],[196.7,100],[200,94],[205.7,89.5,2.3],[210,95],[213,102],[220.7,110],
    [224.3,104],[228,94],[234.3,86.5,2.4],[240,94],[245,104],[249.3,109],[252.3,101],[256.7,94],[262.7,88,2.2],[266.7,89],[271,100],[277.7,112],[280,107],[283,98],[288,92],[292.3,88,2.4],[296.7,92.5],[301,101],[306.7,108],[310,100],[315,97.2,2.2],[320,95,2],[326.7,98.5,2.2],[330,100],[334.3,104],[341.7,97.7],[349.3,92.5],[353,95],[357,101],[362.7,107],[368,99.5],[374,96.5,2.3],[381.7,98,2.3],[386.7,100],[392.3,106],[396.7,98],[401,94],[406,91.2,2],[410,94],[415,101],[420,105],[425,99.5],[433.3,95.5,2.3],[437.7,96.5],[442,103],[445,109],[448.3,104,2],[453,98],[458.3,91.7],[463.3,88,2.2],[468,92],[472,98],[476,105],[480,96],[484,90],
    [488.3,87.5,2.4],[495,90],[500,96],[506.3,104],[510,96.5],[514,91],[519.3,88,2.4],[523.3,89.5],[528,98],[532.7,105],[536.7,98.5],[541.7,90.7],[548.3,84.5,2.2],[551.7,88],[555.7,97],[563,104],[565.7,97],[571.7,88],[577.3,84,2.2],[581.7,90],[586,96],[590.7,103],[595,95],[600,90.7],[605.7,88.5],[610,92.5,2.4],[615,98],[620,105],[625,96],[630,92],[635,90.5,2],[640,93],[647.3,102],[655,95.5],[663.3,90.7,2],[668.3,94],[673,100],[677.3,107],[681.7,98],[691,91.5,2],[695.7,94],[700,102],[705.3,109],[710,100],[715,96],[720,93.5],[725,95.5],[730,104],[734.3,111],[738.3,101.5],[743.3,97],[750,94,2]
];
const airIn = [
    [0,87],[7.3,79.7],[9.3,86.7],[12.3,111.7],[15.7,119.7],[19.7,124],[22,116.7],[24,96.7],[30,85.2],[36.7,77.2],[38.3,91.7],[41.7,109],[46,124],[50,121],[52,101.7],[55,89],[60,86.7],[65.3,83.2],[67.3,94],[70,108.7],[73.7,115],[76,109],[79,102],[81.7,90.7],[86.7,83.2],[93.3,75.2],[95.7,89.2],[99,107.7],[105,113],[107.7,106.7],[110,91.7],[115,83],[121.7,74.2],[124.3,86.7],[128.3,104.2],[132.7,112],[135.7,106.7],[138.3,88.2],[142.3,76.7],[150.3,67.2],[152.3,81.7],[156.7,104.2],[161,119.5],[163.7,114],[166,96.7],[171,82.7],[178.3,73],[181.7,86.7],[186,110],[190.3,113],[193.3,101.7],[195.7,84.2],[200,78.2],[203,74],[207.3,73],[209.3,86.7],[213.3,99.2],[218.3,106],[221.7,99.2],[224.3,86.7],
    [227.7,75.2],[235.7,68],[237,70],[239,86.7],[245.7,106.5],[249.3,103],[251.7,86.7],[255.7,75.7],[264.3,65.5],[266.7,79.2],[270,101.7],[275.7,112.5],[278.3,108],[280.7,86.7],[286.7,74.2],[292.7,66.7],[295.7,84.2],[300,99.2],[303.7,107],[306.7,101.7],[310,84.2,1.5],[313.3,84.7,1.5],[319.3,81.2],[323.3,86.7],[330,94.2],[334,93.2],[338.3,86.7],[343.3,81.2],[349.3,73.7],[352.3,86.7],[355,99.2],[359,105],[362.3,100.7],[365,89.2],[368.3,82.7,1.5],[375,81.2,1.5],[380,82.2],[383.3,87.7],[390,98],[392.3,89.2],[395,79.7],[406,70.2],[409.3,80.7],[413.3,94],[419.3,103],[421.7,89.2],[426.7,82.2],[435,75.7],[437.7,86.7],[442.3,99],[444.3,101],[448.3,94.2],[453.3,80.2],[457.7,69.7],[463.3,65.2],[466.7,76.7],[470,89.2],[474.3,97],[477.7,91.7],[480,76.7],[485,71.2],
    [490,70.5,1.5],[493.3,71],[495.7,86.7],[500,96.7],[504.3,103],[507,94],[510,79],[515,70],[521.7,64],[524,81.7],[530.7,101],[534.3,91.7],[538.3,78],[542.3,68],[548.3,64],[551,65],[552.7,86.7],[556.7,96.7],[561,101],[563.7,91.7],[566.7,76.7],[575,64],[579.3,65],[581,86.7],[585,98],[589,106],[592.3,94],[595.7,78],[600.7,72.2],[605.7,71.2],[609,79],[613.3,99],[617.7,107],[620.3,94],[623.3,80],[629,70],[635,65],[637.7,79],[640.7,94],[645,101],[648.3,92.7],[651.7,79],[658.3,70],[664.3,65.7],[666.7,84],[670,96.7],[674.3,106],[677.7,98],[680.3,84],[685,73.7],[692.3,67.2],[695,81.7],[699,99],[703,111],[705.7,101],[709,84],[713.3,77],[721,69.2],[724,86.7],[728.3,104],[731.3,115],[734,101],[737.7,84],[741.7,76.7],[750,69]
];
const board = [
    [0,97.2],[7.3,90,1.3],[10,92],[15,104.2],[21,112.8],[23.7,105.7,.5],[28.3,97,1],[37.3,89.2,1.3],[41,104.2],[47.7,117],[51.7,108,.5],[57.7,97,1],[65.7,91.7,1],[70,99.2],[75,105.5],[80.7,104.2],[83.3,97.7],[93.3,87.7,1.4],[96.7,92.7],[101.7,105.7],[105.7,107],[109,105.7],[113.3,94.7],[122.7,86.7,1],[128.3,99.7],[134.3,105.2],[137.3,101.7],[140,92.7],[151.7,82.2,1.4],[156.7,96.7],[164,107.2],[167.3,101.7],[171.7,92.7],[179,84.5,1.2],[185,92.7],[191.7,103.7],[195,94],[200,86.7],[208.3,81.2,1.2],[213.3,95],[220,100.7],
    [223.3,99.7],[228.3,85.7],[236.7,77.8,1.2],[243.3,95.7],[249.3,100.8],[253.3,91.7],[265,79.2,1.7],[270,94],[276.3,106.7],[281.7,92.7,1],[293.3,80.2,1.7],[300,94],[305,102.2],[310,92.7],[321,88.2,.5],[326.7,92.7],[334.3,96.2],[341.7,92.2],[350,84.2,.8],[355,94],[362.3,99.2],[369,91.7],[378.3,90],[383.3,90.7],[390.7,97],[396.7,90.7],[407.7,85.2,.3],[411.7,88.2],[419.7,98],[425,93.7],[437.7,88.5,.3],[443.3,96.2,.3],[448.3,95.7,.3],[453.3,92.7],[457.7,86.2],[465,82,.3],[470,86.7],[476.7,93.7],[481.7,86.7],[488.3,81.7,.5],
    [493.3,81.5,.5],[498.3,89.2],[505,96.2],[511.7,88.7],[522.3,81.2],[526.7,90],[532.7,96.7],[540,87.7],[550.7,77.2,1],[556.7,91.7],[562.3,96.5],[568.3,85.7],[578.3,77.2,1],[585,89.2],[591,95.8],[596.7,87.7],[606.7,82.7,.3],[611.7,85.2],[619.3,97.5],[626.7,87.7],[636.7,83],[641.7,88.2],[647.7,93.7],[651.7,92.2],[665.7,83.3],[671,91.7],[676.7,97.2],[683.3,90.2],[694.3,84.2],[704.3,100.2],[711.7,91.7],[722.7,85.5],[733.3,101.7],[741.7,91.7],[750.7,85.7]
];

const left = 42, top0 = 19, unit = 6.66;
const y = t => top0 + (135 - t) * unit;

let seed = 7;
function rand() {
    seed = (seed * 16807) % 2147483647;
    return seed / 2147483647;
}

// Catmull-Rom between keyframes, so the peaks come out rounded
function curve(points, i, f) {
    const b = points[i - 1][1], c = points[i][1];
    const a = points[i - 2] ? points[i - 2][1] : b;
    const d = points[i + 1] ? points[i + 1][1] : c;
    const v = .5 * (2 * b + (c - a) * f + (2 * a - 5 * b + 4 * c - d) * f * f + (3 * b - a - 3 * c + d) * f * f * f);
    return Math.min(Math.max(v, Math.min(b, c) - .6), Math.max(b, c) + .6);
}

// the sensors report in steps, which quant brings back
function line(points, jitter, step, quant) {
    let d = "";
    for (let i = 1; i < points.length; i++) {
        const x0 = points[i - 1][0];
        const [x1, , j] = points[i];
        for (let x = x0; x < x1; x += step) {
            const t = curve(points, i, (x - x0) / (x1 - x0));
            const amp = j || jitter(t);
            let v = t + (rand() * 2 - 1) * amp;
            if (quant) {
                v = Math.round(v / quant) * quant;
            }
            v = Math.max(65, v);
            d += (d ? "L" : "M") + (left + x).toFixed(1) + " " + y(v).toFixed(1);
        }
    }
    return d;
}

let svg = "";
for (let t = 65; t <= 135; t++) {
    const major = t % 5 === 0;
    svg += `<path d="M${left} ${Math.round(y(t)) + .5}H980" stroke="${major ? "#b3b3b3" : "#e6e6e6"}"/>`;
    if (major) {
        svg += `<text x="32" y="${Math.round(y(t)) + 5}">${t}</text>`;
    }
}
svg += `<path d="M${left}.5 19V493" stroke="#b3b3b3"/>`;
for (let x = left + 1; x < 980; x += 2) {
    svg += `<path d="M${x + .5} 486v6" stroke="${x % 6 ? "#b3b3b3" : "#8f8f8f"}"/>`;
}
for (let day = 0; day < 32; day++) {
    svg += `<path d="M${(70.5 + day * 28.516).toFixed(1)} 18V485" stroke="#ffd010" stroke-width="3"/>`;
}
svg += `<path d="${line(gpu, () => 2, .8, .9)}" fill="none" stroke="#3c4408" stroke-width="1.2"/>`;
svg += `<path d="${line(gpu, () => 1.6, .5, .9)}" fill="none" stroke="#ff420e" stroke-width="2.4"/>`;
svg += `<path d="${line(airIn, t => t > 97 ? 3 : .8, .5)}" fill="none" stroke="#729fcf" stroke-width="1.3"/>`;
svg += `<path d="${line(board, () => .2, .4)}" fill="none" stroke="#006400" stroke-width="1.4"/>`;
document.getElementById("plot").innerHTML = svg;
```
